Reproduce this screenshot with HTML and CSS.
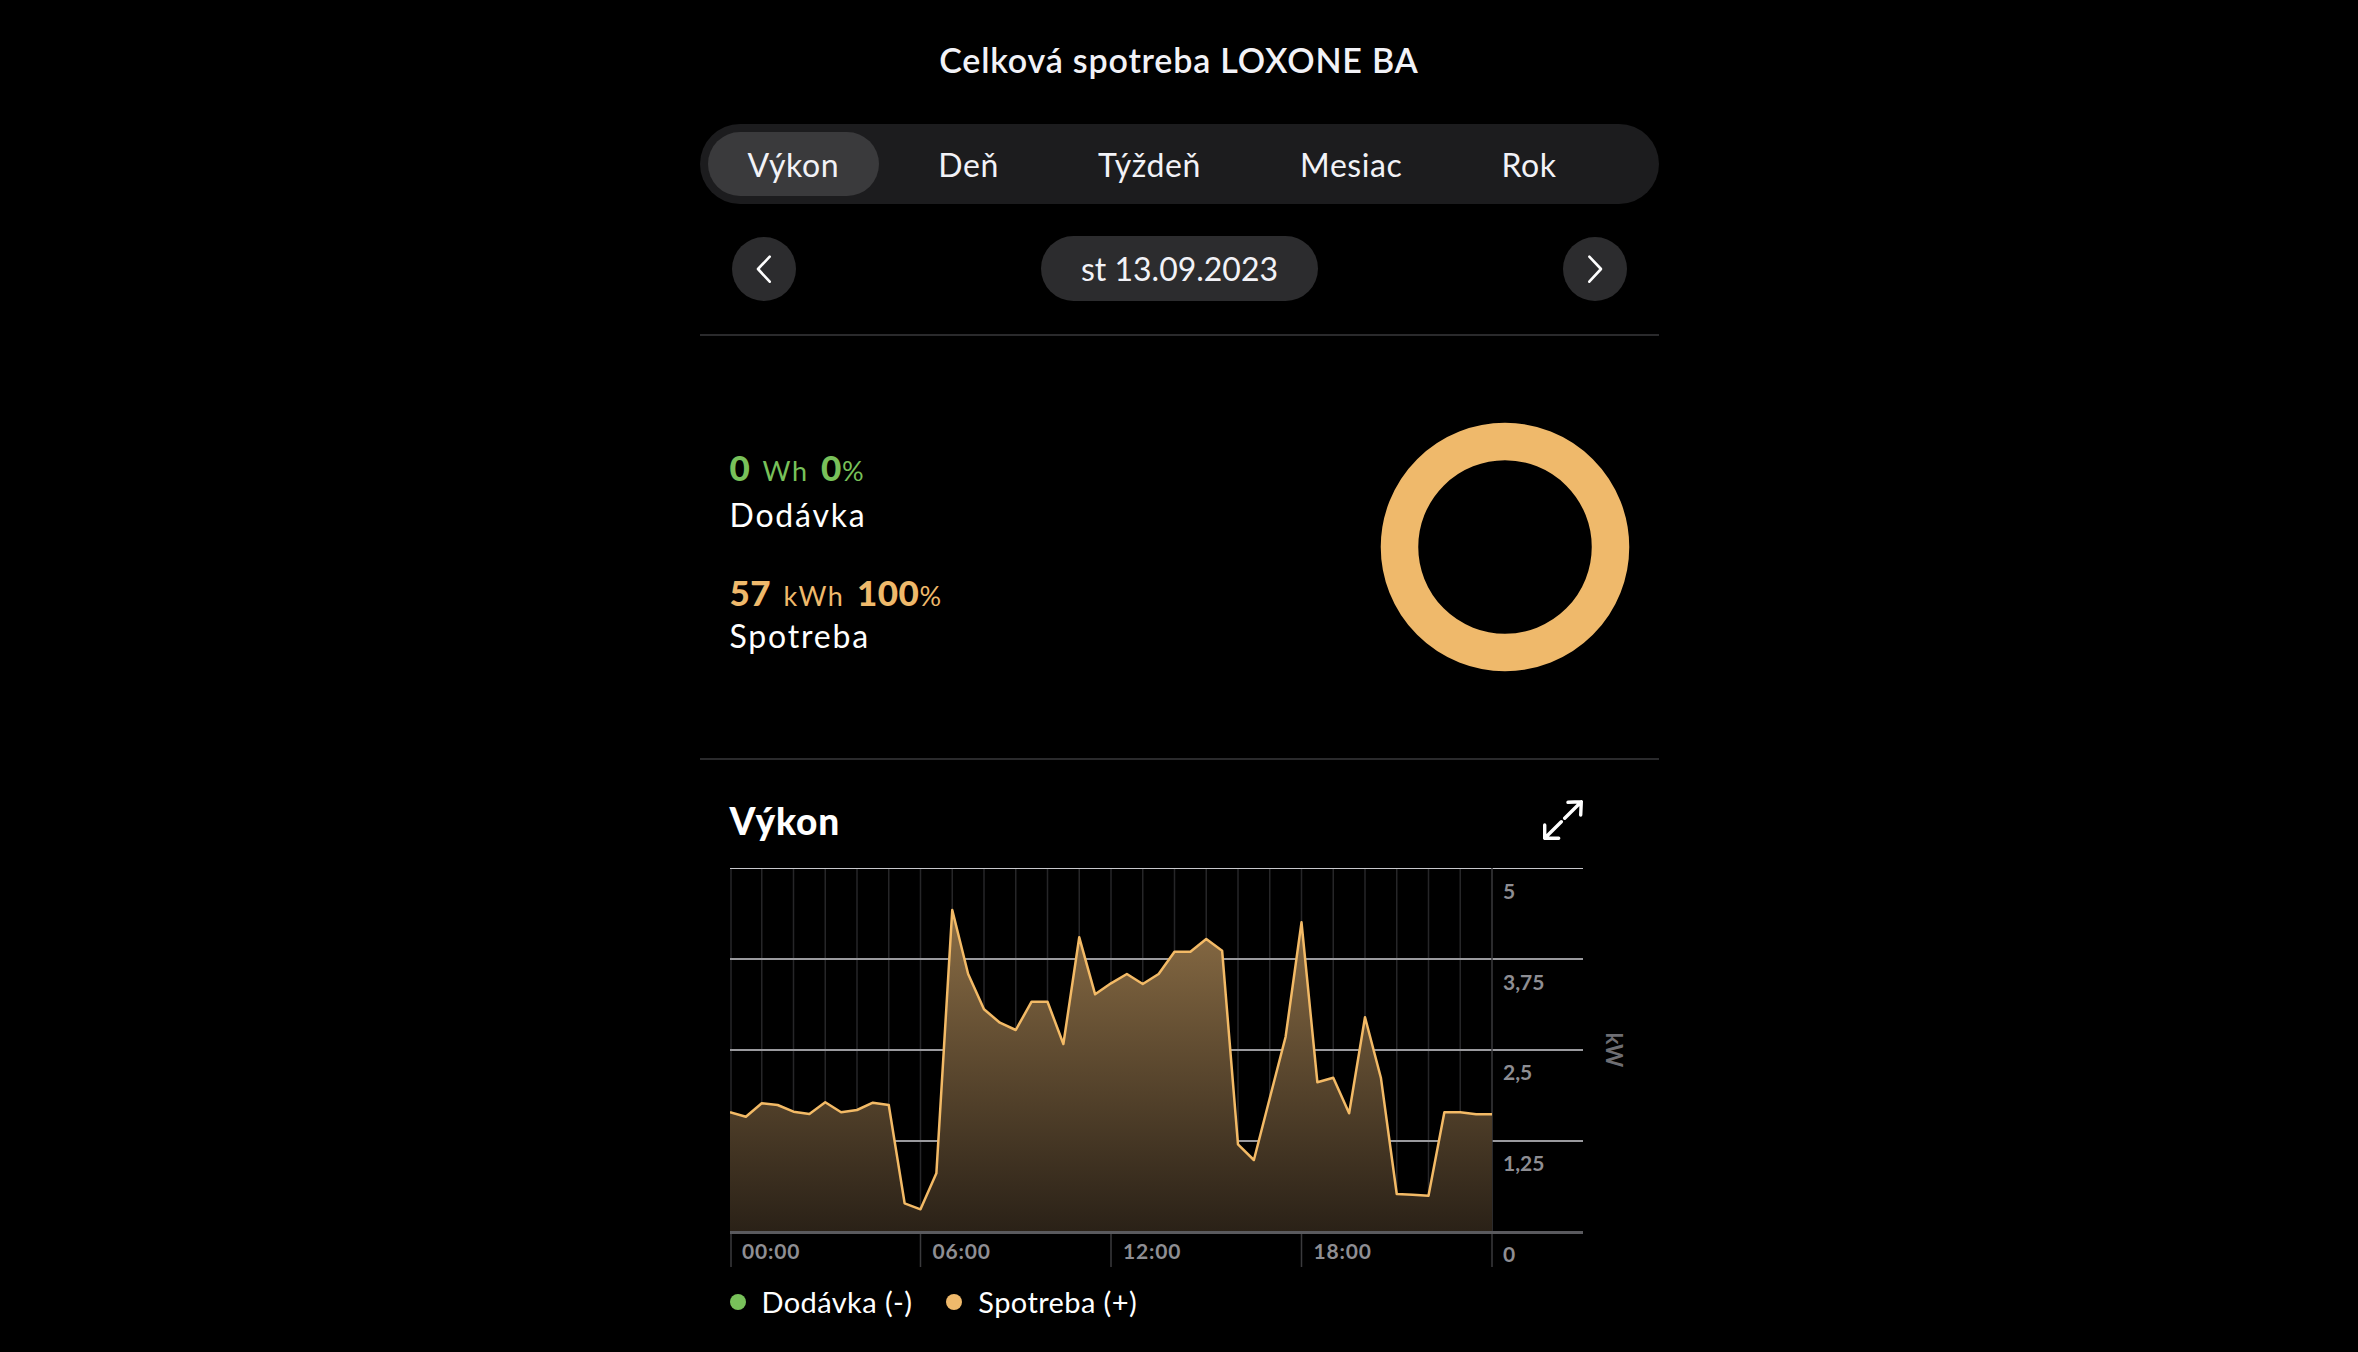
FILE: index.html
```html
<!DOCTYPE html>
<html lang="sk">
<head>
  <meta charset="UTF-8" />
  <meta name="viewport" content="width=device-width, initial-scale=1.0"/>
  <title>Celková spotreba LOXONE BA</title>
  <link rel="stylesheet" href="styles.css">
</head>
<body>

  <div class="screen">
    <h1 class="title">Celková spotreba LOXONE BA</h1>

    <!-- prepinac obdobia -->
    <div class="tabs">
      <div class="tab active">Výkon</div>
      <div class="tab">Deň</div>
      <div class="tab">Týždeň</div>
      <div class="tab">Mesiac</div>
      <div class="tab">Rok</div>
    </div>

    <div class="date-nav">
      <div class="round-btn">
        <svg width="64" height="64" viewBox="0 0 64 64"><path d="M37.7 19.7 L26 32 L37.7 44.7" /></svg>
      </div>
      <div class="date-pill">st 13.09.2023</div>
      <div class="round-btn">
        <svg width="64" height="64" viewBox="0 0 64 64"><path d="M26.3 19.7 L38 32 L26.3 44.7" /></svg>
      </div>
    </div>

    <!-- suhrn -->
    <div class="summary">
      <div class="values">
        <div class="value green"><b>0</b> Wh <b>0</b>%</div>
        <div class="label">Dodávka</div>
        <div class="value orange second"><b>57</b> kWh <b>100</b>%</div>
        <div class="label second">Spotreba</div>
      </div>
      <svg class="donut" width="250" height="250" viewBox="0 0 250 250">
        <circle cx="125" cy="125" r="105.5" fill="none" stroke="#efb96b" stroke-width="37.5" />
      </svg>
    </div>

    <!-- graf -->
    <div class="chart-box">
      <div class="chart-head">
        <h2>Výkon</h2>
        <svg class="expand" width="40" height="40" viewBox="0 0 40 40">
          <path d="M25 2.3 L38.3 1.7 L37.7 15 M38.3 1.7 L21.7 18.3" />
          <path d="M15.7 38.3 L1.7 38.3 L1.7 25 M1.7 38.3 L18.3 21.7" />
        </svg>
      </div>

      <svg class="chart" width="899" height="410" viewBox="0 0 899 410">
        <defs>
          <linearGradient id="fillGrad" x1="0" y1="10" x2="0" y2="374" gradientUnits="userSpaceOnUse">
            <stop offset="0" stop-color="#97774b" />
            <stop offset="1" stop-color="#2a2117" />
          </linearGradient>
        </defs>
        <g id="vlines"></g>
        <line class="grid-top" x1="0" y1="10.5" x2="853" y2="10.5" />
        <line class="grid" x1="0" y1="101" x2="853" y2="101" />
        <line class="grid" x1="0" y1="192" x2="853" y2="192" />
        <line class="grid" x1="0" y1="283" x2="853" y2="283" />
        <line class="tick" x1="1" y1="374" x2="1" y2="409" />
        <line class="tick" x1="190.5" y1="374" x2="190.5" y2="409" />
        <line class="tick" x1="381" y1="374" x2="381" y2="409" />
        <line class="tick" x1="571.5" y1="374" x2="571.5" y2="409" />
        <line class="tick" x1="762" y1="10" x2="762" y2="409" />
        <path id="area" fill="url(#fillGrad)" />
        <path id="line" class="data-line" />
        <line class="axis" x1="0" y1="374.5" x2="853" y2="374.5" />

        <text class="xlab" x="12" y="401">00:00</text>
        <text class="xlab" x="202.5" y="401">06:00</text>
        <text class="xlab" x="393" y="401">12:00</text>
        <text class="xlab" x="583.5" y="401">18:00</text>

        <text class="ylab" x="773" y="41">5</text>
        <text class="ylab" x="773" y="132">3,75</text>
        <text class="ylab" x="773" y="222">2,5</text>
        <text class="ylab" x="773" y="313">1,25</text>
        <text class="ylab" x="773" y="404">0</text>

        <text class="unit" x="884" y="192" transform="rotate(90 884 192)">kW</text>
      </svg>

      <div class="legend">
        <span class="dot green-bg"></span><span>Dodávka (-)</span>
        <span class="dot orange-bg second"></span><span>Spotreba (+)</span>
      </div>
    </div>
  </div>

  <script>
    // namerane hodnoty po pol hodine (y v pixeloch grafu)
    const ys = [254.3, 258.7, 245.3, 247, 253.7, 256, 244.3, 254.3, 252, 244.7, 247,
      345.3, 351.3, 315.3, 52, 116, 151.3, 164.7, 172, 143.7, 143.7, 186, 79.3,
      136.3, 125.3, 116, 126, 116, 93.7, 93.7, 81, 92.7, 286.3, 302, 240.3, 178.7,
      64.3, 224.3, 219.7, 255.3, 159.3, 219.7, 336, 336.7, 337.7, 254.3, 254.3,
      256.3, 256.3];
    const step = 15.875;

    let pts = ys.map((y, i) => (i * step).toFixed(2) + ' ' + y).join(' L');
    document.getElementById('line').setAttribute('d', 'M' + pts);
    document.getElementById('area').setAttribute('d', 'M0 374 L' + pts + ' L762 374 Z');

    // zvisle ciary po hodinach
    const vlines = document.getElementById('vlines');
    for (let h = 0; h < 24; h++) {
      const l = document.createElementNS('http://www.w3.org/2000/svg', 'line');
      const x = h === 0 ? 1 : h * 31.75;
      l.setAttribute('x1', x);
      l.setAttribute('x2', x);
      l.setAttribute('y1', 10);
      l.setAttribute('y2', 374);
      l.setAttribute('class', 'vline');
      vlines.appendChild(l);
    }
  </script>
</body>
</html>
```

FILE: styles.css
```css
/* Zakladny stil */
body {
  margin: 0;
  background-color: #000;
  color: #fff;
  font-family: 'Lato', 'Liberation Sans', sans-serif;
}

.screen {
  width: 959px;
  margin: 0 auto;
}

.title {
  margin: 40px 0 0;
  font-size: 34px;
  line-height: 40px;
  font-weight: 600;
  letter-spacing: 0.8px;
  text-align: center;
  color: #f2f2f7;
}

/* Prepinac */
.tabs {
  display: flex;
  gap: 19px;
  height: 80px;
  margin-top: 44px;
  padding: 8px;
  box-sizing: border-box;
  background-color: #1c1c1e;
  border-radius: 40px;
}

.tab {
  display: flex;
  align-items: center;
  padding: 0 40px;
  border-radius: 32px;
  font-size: 32px;
  letter-spacing: 0.6px;
  color: #f2f2f7;
}

.tab.active {
  background-color: #3a3a3c;
}

.date-nav {
  display: flex;
  justify-content: space-between;
  align-items: center;
  margin-top: 32px;
  padding: 0 31px 33px 32px;
  border-bottom: 2px solid #2a2a2c;
}

.round-btn {
  width: 64px;
  height: 64px;
  border-radius: 50%;
  background-color: #2c2c2e;
}

.round-btn path {
  fill: none;
  stroke: #fff;
  stroke-width: 2.6;
  stroke-linecap: round;
  stroke-linejoin: round;
}

.date-pill {
  height: 65px;
  line-height: 65px;
  padding: 0 40px;
  border-radius: 33px;
  background-color: #2c2c2e;
  font-size: 32px;
  color: #f2f2f7;
}

/* Suhrn */
.summary {
  display: flex;
  justify-content: space-between;
  align-items: center;
  height: 422px;
  padding: 0 29px 0 30px;
  border-bottom: 2px solid #2a2a2c;
}

.values {
  padding-top: 12px;
}

.value {
  font-size: 27px;
  line-height: 40px;
  letter-spacing: 1.6px;
  word-spacing: 4px;
}

.value b {
  font-size: 35px;
  font-weight: 900;
  letter-spacing: 0.5px;
}

.value.second {
  margin-top: 33px;
}

.label {
  font-size: 32px;
  line-height: 48px;
  letter-spacing: 1.8px;
}

.label.second {
  margin-top: -4px;
}

.green { color: #78c15a; }
.orange { color: #efb96b; }
.green-bg { background-color: #78c15a; }
.orange-bg { background-color: #efb96b; }

/* Graf */
.chart-box {
  padding: 0 30px;
}

.chart-head {
  display: flex;
  justify-content: space-between;
  align-items: flex-start;
  width: 853px;
  padding-top: 34px;
}

.chart-head h2 {
  margin: 7px 0 0;
  font-size: 37px;
  line-height: 40px;
  font-weight: 900;
  letter-spacing: 0.8px;
}

.expand {
  margin-top: 6px;
}

.expand path {
  fill: none;
  stroke: #fff;
  stroke-width: 3.4;
  stroke-linecap: round;
  stroke-linejoin: round;
}

.chart {
  display: block;
  margin-top: 17px;
}

.vline {
  stroke: #262628;
  stroke-width: 1.5;
}

.grid-top {
  stroke: #c7c7cc;
  stroke-width: 1;
}

.grid {
  stroke: #9a9a9e;
  stroke-width: 2;
}

.tick {
  stroke: #3a3a3c;
  stroke-width: 1.5;
}

.axis {
  stroke: #5a5a5e;
  stroke-width: 3;
}

.data-line {
  fill: none;
  stroke: #f3ba66;
  stroke-width: 2.5;
  stroke-linejoin: round;
}

.xlab,
.ylab {
  font-family: 'Lato', 'Liberation Sans', sans-serif;
  font-size: 21px;
  font-weight: 700;
  fill: #8e8e93;
}

.xlab {
  letter-spacing: 0.8px;
}

.unit {
  font-family: 'Lato', 'Liberation Sans', sans-serif;
  font-size: 22px;
  font-weight: 700;
  fill: #6e6e73;
  text-anchor: middle;
  dominant-baseline: central;
}

.legend {
  display: flex;
  align-items: center;
  margin-top: 17px;
  font-size: 29px;
  line-height: 34px;
  letter-spacing: 0.4px;
}

.dot {
  width: 16px;
  height: 16px;
  border-radius: 50%;
  margin-right: 16px;
}

.dot.second {
  margin-left: 34px;
}
```
